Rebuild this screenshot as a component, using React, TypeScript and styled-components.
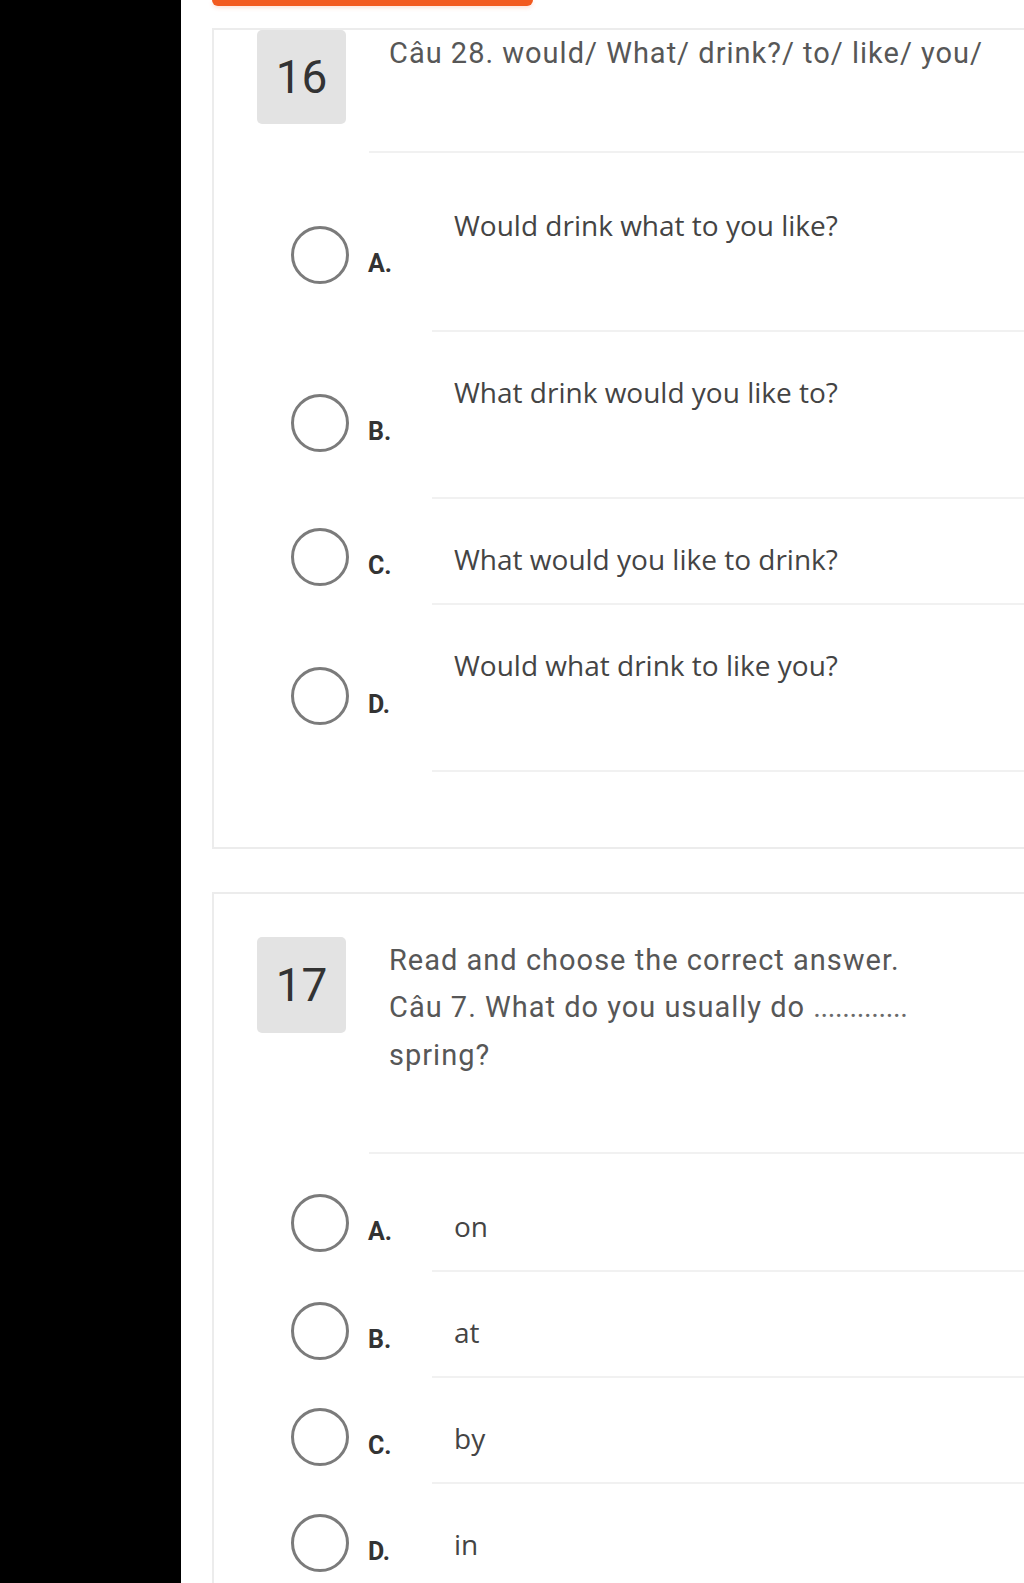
import React from 'react';
import styled, { createGlobalStyle } from 'styled-components';

const Global = createGlobalStyle`
  html, body { margin: 0; padding: 0; background: #fff; }
  body { font-family: Roboto, "Liberation Sans", sans-serif; }
  * { box-sizing: border-box; }
`;

const Page = styled.div`
  display: flex;
  width: 1024px;
  min-height: 1583px;
  height: 1583px;
  overflow: hidden;
`;

const Sidebar = styled.aside`
  flex: none;
  width: 181px;
  background: #000;
`;

const Main = styled.main`
  flex: 1;
  min-width: 0;
  background: #fff;
  padding-left: 31px;
`;

const TopBar = styled.div`
  width: 321px;
  height: 6px;
  background: #f25a1f;
  border-radius: 0 0 6px 6px;
  box-shadow: 0 2px 4px rgba(242, 90, 31, 0.18);
`;

const Card = styled.section<{ $top: number; $padTop: number }>`
  margin-top: ${(p) => p.$top}px;
  border: 2px solid #ececec;
  border-right: none;
  padding: ${(p) => p.$padTop}px 0 75px 43px;
`;

const QuestionRow = styled.div`
  display: flex;
  align-items: flex-start;
  gap: 23px;
`;

const NumberBox = styled.div<{ $h: number }>`
  flex: none;
  width: 89px;
  height: ${(p) => p.$h}px;
  border-radius: 5px;
  background: #e3e3e3;
  color: #333;
  font-family: Roboto, sans-serif;
  font-size: 46px;
  display: flex;
  align-items: center;
  justify-content: center;
`;

const QuestionBody = styled.div`
  flex: 1;
  padding: 0 0 73px 20px;
  border-bottom: 2px solid #f1f1f1;
  color: #575757;
  font-family: Roboto, sans-serif;
  font-size: 29px;
  line-height: 47.5px;
  letter-spacing: 1px;
`;

const Line = styled.div``;

const Blank = styled.span`
  letter-spacing: -0.4px;
  color: #6a6a6a;
`;

const OptionList = styled.div`
  padding-top: 12px;
  margin-left: 34px;
`;

const OptionRow = styled.div`
  display: flex;
  align-items: center;
`;

const Marker = styled.div<{ $shift: number }>`
  flex: none;
  width: 141px;
  display: flex;
  align-items: center;
  margin-top: ${(p) => p.$shift}px;
`;

const Radio = styled.span`
  flex: none;
  width: 58px;
  height: 58px;
  border-radius: 50%;
  border: 3px solid #7b7b7b;
`;

const Letter = styled.span`
  padding: 17px 0 0 19px;
  font-family: Roboto, sans-serif;
  font-weight: 700;
  font-size: 25px;
  color: #333;
`;

const OptionBody = styled.div<{ $tall: boolean }>`
  flex: 1;
  padding: 38px 0 ${(p) => (p.$tall ? 83 : 22)}px 22px;
  border-bottom: 2px solid #f1f1f1;
  font-family: "Open Sans", "Noto Sans", sans-serif;
  font-size: 28px;
  line-height: 44px;
  color: #444;
`;

type Opt = { letter: string; text: string; tall?: boolean };

const q16: Opt[] = [
  { letter: 'A.', text: 'Would drink what to you like?', tall: true },
  { letter: 'B.', text: 'What drink would you like to?', tall: true },
  { letter: 'C.', text: 'What would you like to drink?' },
  { letter: 'D.', text: 'Would what drink to like you?', tall: true },
];

const q17: Opt[] = [
  { letter: 'A.', text: 'on' },
  { letter: 'B.', text: 'at' },
  { letter: 'C.', text: 'by' },
  { letter: 'D.', text: 'in' },
];

function Options({ items }: { items: Opt[] }) {
  return (
    <OptionList>
      {items.map((o, i) => (
        <OptionRow key={o.letter}>
          <Marker $shift={o.tall ? (i === 0 ? 14 : 15) : i === 0 ? 7 : 11}>
            <Radio />
            <Letter>{o.letter}</Letter>
          </Marker>
          <OptionBody $tall={!!o.tall}>{o.text}</OptionBody>
        </OptionRow>
      ))}
    </OptionList>
  );
}

export default function App() {
  return (
    <>
      <Global />
      <Page>
        <Sidebar />
        <Main>
          <TopBar />
          <Card $top={22} $padTop={0}>
            <QuestionRow>
              <NumberBox $h={94}>16</NumberBox>
              <QuestionBody>
                <Line>Câu 28. would/ What/ drink?/ to/ like/ you/</Line>
              </QuestionBody>
            </QuestionRow>
            <Options items={q16} />
          </Card>
          <Card $top={43} $padTop={43}>
            <QuestionRow>
              <NumberBox $h={96}>17</NumberBox>
              <QuestionBody>
                <Line>Read and choose the correct answer.</Line>
                <Line>
                  Câu 7. What do you usually do <Blank>.............</Blank>
                </Line>
                <Line>spring?</Line>
              </QuestionBody>
            </QuestionRow>
            <Options items={q17} />
          </Card>
        </Main>
      </Page>
    </>
  );
}
